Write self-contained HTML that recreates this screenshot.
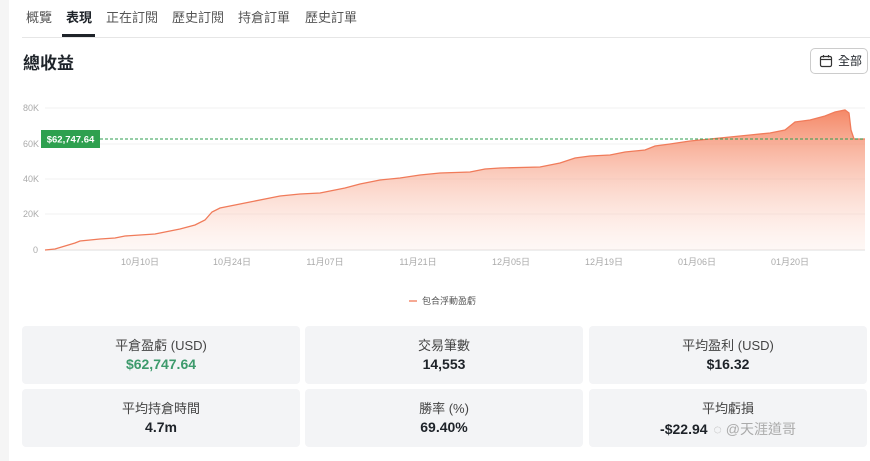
<!DOCTYPE html>
<html><head><meta charset="utf-8"><style>
*{margin:0;padding:0;box-sizing:border-box}
body{width:870px;height:461px;background:#f5f5f5;font-family:"Liberation Sans","Noto Sans CJK TC",sans-serif;position:relative;overflow:hidden;color:#1e2329}
.card{position:absolute;left:9px;top:0;width:861px;height:461px;background:#fff}
.tabs{position:absolute;left:26px;top:7px;font-size:13px;color:#555}
.tabs span{position:absolute;white-space:nowrap}
.tline{position:absolute;left:22px;right:0;top:37px;height:1px;background:#e6e6e6}
.ul{position:absolute;left:62px;top:34px;width:33px;height:3px;background:#1e2329}
h1{position:absolute;left:23px;top:49px;font-size:17px;font-weight:bold}
.btn{position:absolute;left:810px;top:48px;width:58px;height:26px;border:1px solid #ccc;border-radius:5px;font-size:12px;line-height:24px;padding-left:27px}
.box{position:absolute;background:#f3f4f6;border-radius:4px;text-align:center}
.box .l{font-size:13px;color:#444;margin-top:9px}
.box .v{font-size:14px;font-weight:bold;margin-top:2px}
svg text{font-family:"Liberation Sans","Noto Sans CJK TC",sans-serif}
</style></head><body>
<div class="card"></div>
<div class="tabs">
<span style="left:0">概覽</span><span style="left:40px;color:#1e2329;font-weight:bold">表現</span><span style="left:80px">正在訂閱</span><span style="left:146px">歷史訂閱</span><span style="left:212px">持倉訂單</span><span style="left:279px">歷史訂單</span>
</div>
<div class="tline"></div><div class="ul"></div>
<h1>總收益</h1>
<div class="btn"><svg style="position:absolute;left:8px;top:5px" width="14" height="14" viewBox="0 0 14 14" fill="none" stroke="#333" stroke-width="1.2"><rect x="1.5" y="2.5" width="11" height="10" rx="1.5"/><line x1="1.5" y1="5.5" x2="12.5" y2="5.5"/><line x1="4.5" y1="1" x2="4.5" y2="3.5"/><line x1="9.5" y1="1" x2="9.5" y2="3.5"/></svg>全部</div>
<svg style="position:absolute;left:0;top:0" width="870" height="320">
<defs><linearGradient id="g" x1="0" y1="0" x2="0" y2="1"><stop offset="0" stop-color="#f4825f" stop-opacity=".95"/><stop offset="1" stop-color="#fde3da" stop-opacity=".25"/></linearGradient></defs>
<g stroke="#f0f0f0"><line x1="45" y1="108" x2="865" y2="108"/><line x1="45" y1="144" x2="865" y2="144"/><line x1="45" y1="179" x2="865" y2="179"/><line x1="45" y1="214" x2="865" y2="214"/></g>
<line x1="45" y1="250" x2="865" y2="250" stroke="#ddd"/>
<g font-size="9" fill="#aaa"><text x="23" y="111">80K</text><text x="23" y="147">60K</text><text x="23" y="182">40K</text><text x="23" y="217">20K</text><text x="33" y="253">0</text>
<text x="140" y="265" text-anchor="middle">10月10日</text><text x="232" y="265" text-anchor="middle">10月24日</text><text x="325" y="265" text-anchor="middle">11月07日</text><text x="418" y="265" text-anchor="middle">11月21日</text><text x="511" y="265" text-anchor="middle">12月05日</text><text x="604" y="265" text-anchor="middle">12月19日</text><text x="697" y="265" text-anchor="middle">01月06日</text><text x="790" y="265" text-anchor="middle">01月20日</text></g>
<path d="M45,250 L55,249 65,246 75,243 80,241 90,240 100,239 115,238 125,236 140,235 155,234 165,232 180,229 195,225 205,220 212,212 220,208 235,205 250,202 270,198 280,196 300,194 320,193 330,191 345,188 360,184 380,180 400,178 420,175 440,173 470,172 485,169 500,168 540,167 560,163 575,158 590,156 610,155 625,152 645,150 655,146 670,144 690,141 710,139 730,137 750,135 770,133 785,130 795,122 810,120 825,116 835,112 845,110 849,113 851,130 854,139 865,139 L865,250 Z" fill="url(#g)"/>
<path d="M45,250 L55,249 65,246 75,243 80,241 90,240 100,239 115,238 125,236 140,235 155,234 165,232 180,229 195,225 205,220 212,212 220,208 235,205 250,202 270,198 280,196 300,194 320,193 330,191 345,188 360,184 380,180 400,178 420,175 440,173 470,172 485,169 500,168 540,167 560,163 575,158 590,156 610,155 625,152 645,150 655,146 670,144 690,141 710,139 730,137 750,135 770,133 785,130 795,122 810,120 825,116 835,112 845,110 849,113 851,130 854,139 865,139" fill="none" stroke="#f07b5a" stroke-width="1.3"/>
<line x1="100" y1="139" x2="865" y2="139" stroke="#2e9e4f" stroke-dasharray="3,2" stroke-width="1"/>
<rect x="41" y="130" width="59" height="18" fill="#2ea04f"/>
<text x="70.5" y="142.5" font-size="9.5" font-weight="bold" fill="#fff" text-anchor="middle">$62,747.64</text>
<line x1="409" y1="301" x2="417" y2="301" stroke="#f07b5a" stroke-width="1.3"/>
<text x="422" y="304" font-size="9" fill="#555">包合浮動盈虧</text>
</svg>
<div class="box" style="left:22px;top:326px;width:278px;height:58px"><div class="l">平倉盈虧 (USD)</div><div class="v" style="color:#3d9a6c">$62,747.64</div></div>
<div class="box" style="left:305px;top:326px;width:278px;height:58px"><div class="l">交易筆數</div><div class="v">14,553</div></div>
<div class="box" style="left:589px;top:326px;width:278px;height:58px"><div class="l">平均盈利 (USD)</div><div class="v">$16.32</div></div>
<div class="box" style="left:22px;top:389px;width:278px;height:58px"><div class="l">平均持倉時間</div><div class="v">4.7m</div></div>
<div class="box" style="left:305px;top:389px;width:278px;height:58px"><div class="l">勝率 (%)</div><div class="v">69.40%</div></div>
<div class="box" style="left:589px;top:389px;width:278px;height:58px"><div class="l">平均虧損</div><div class="v" style="white-space:nowrap">-$22.94<span style="font-weight:normal;color:#aaa;font-size:14px;margin-left:6px">◌ @天涯道哥</span></div></div>
</body></html>
